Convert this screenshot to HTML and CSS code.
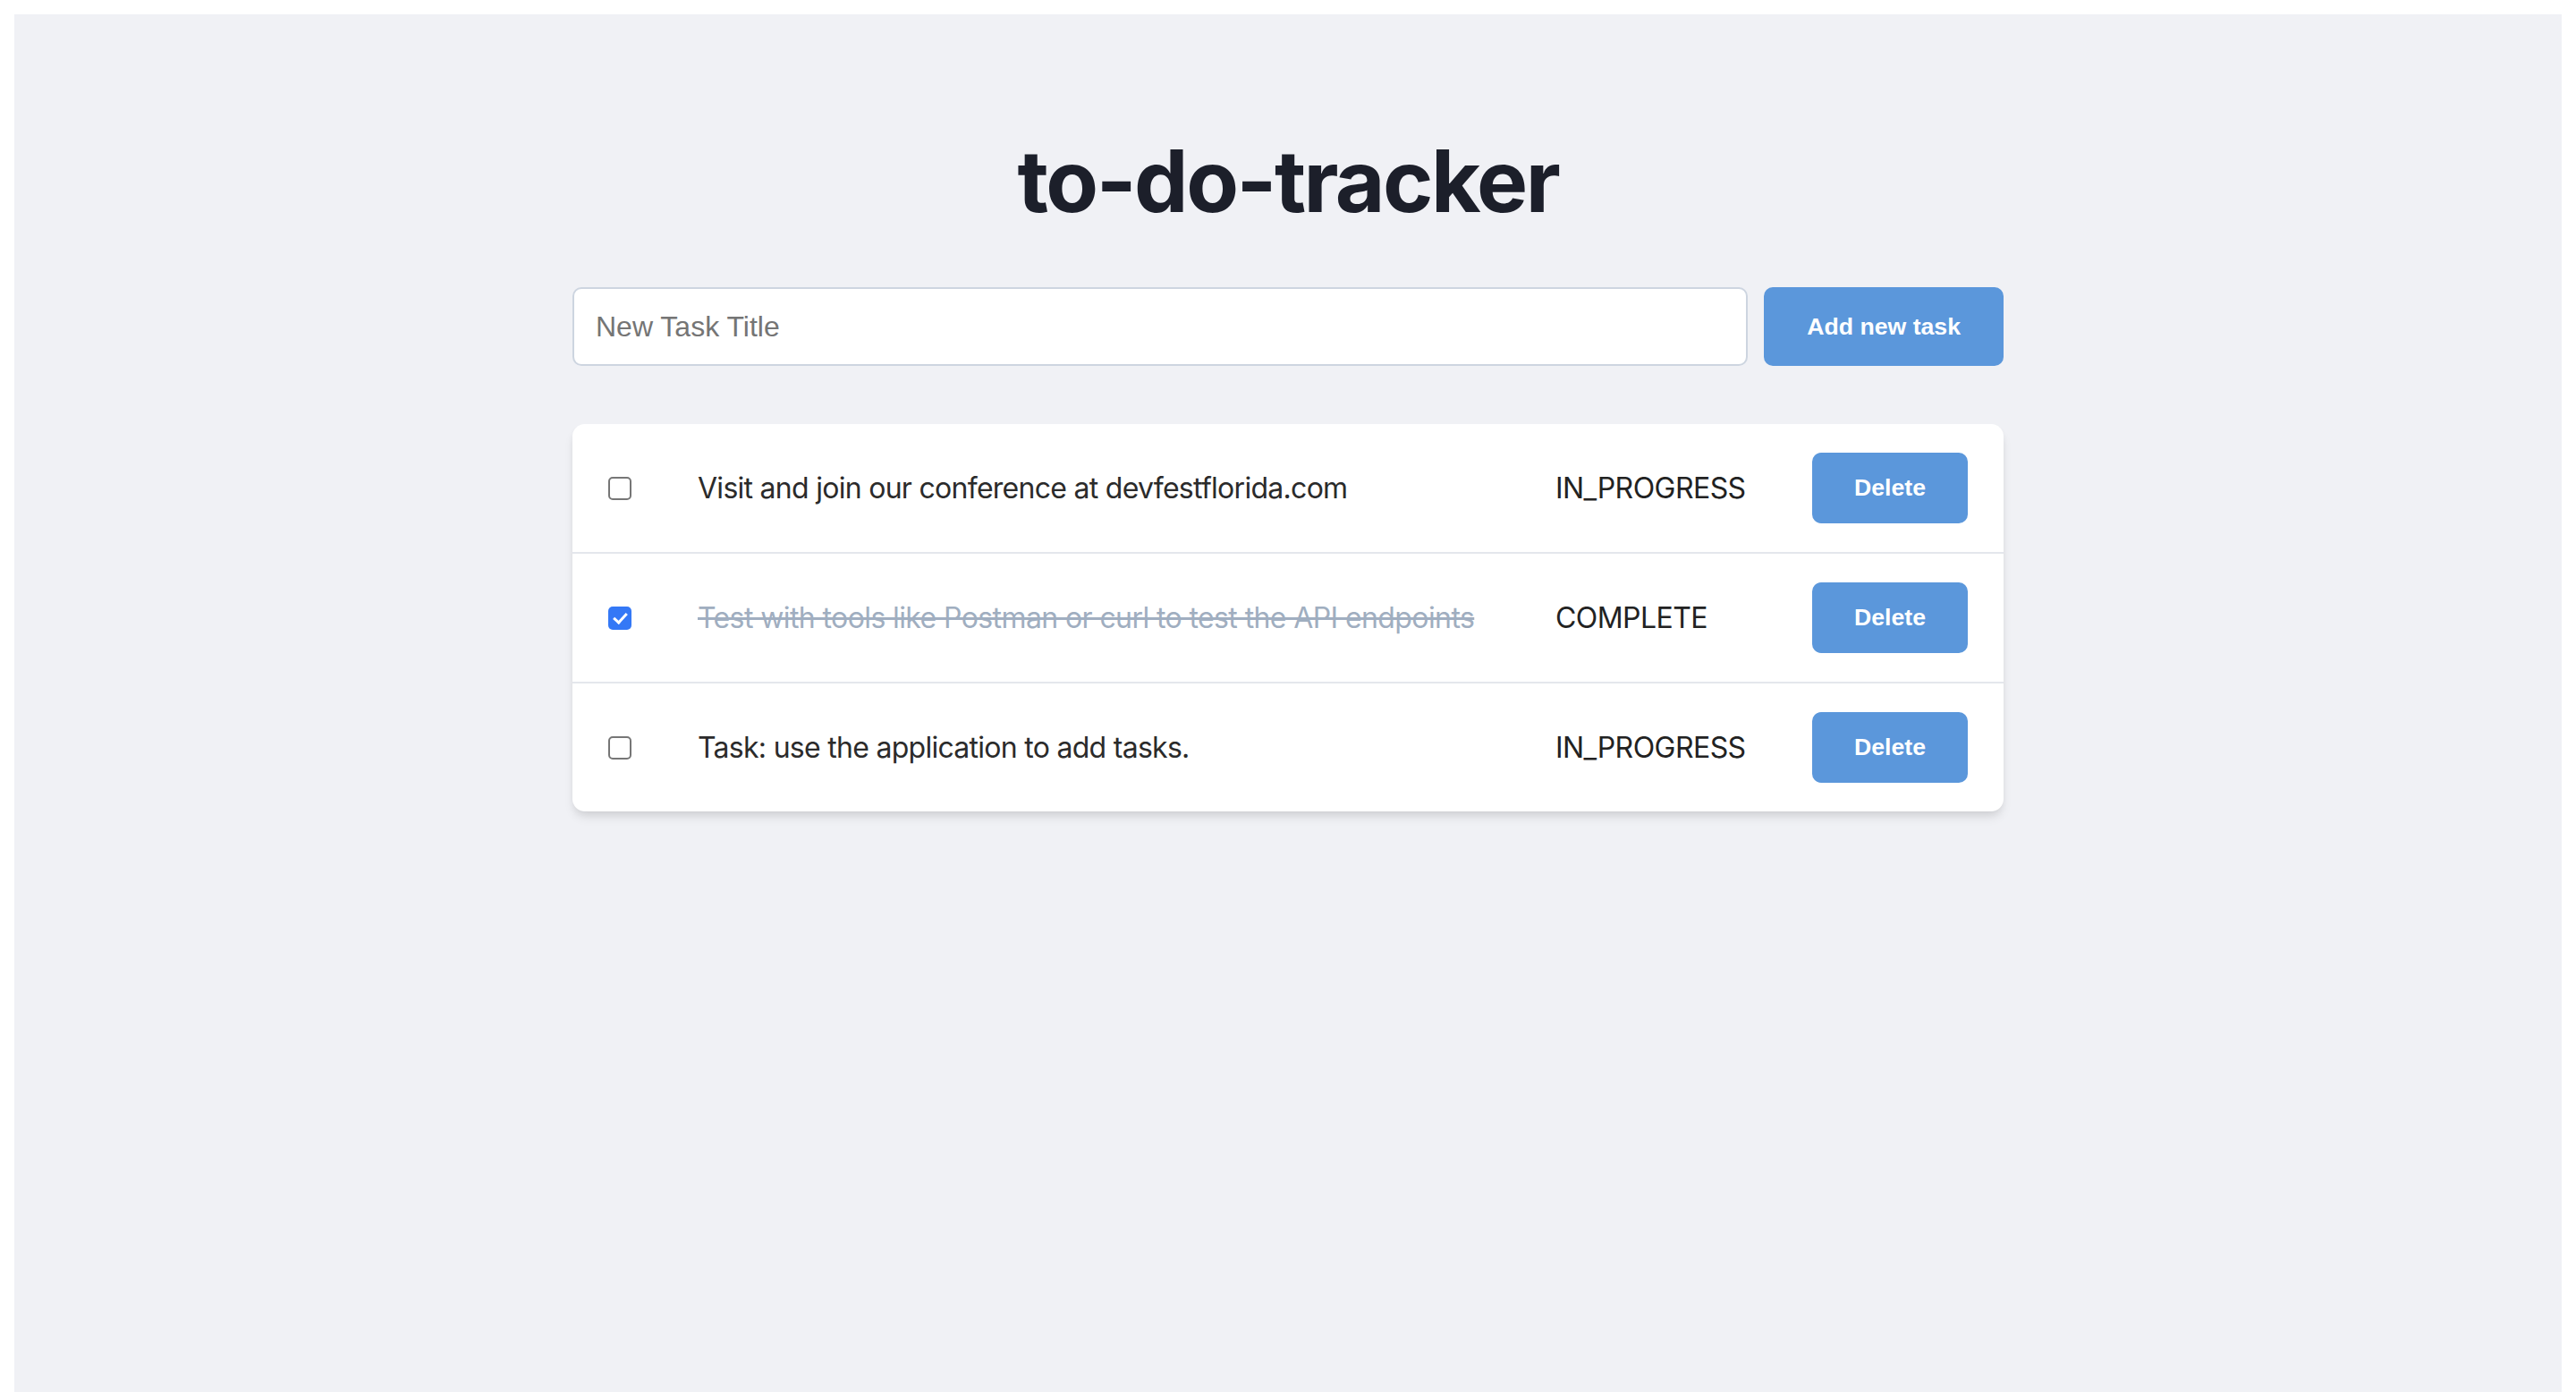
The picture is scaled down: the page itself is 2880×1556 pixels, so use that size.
FILE: index.html
```html
<!DOCTYPE html>
<html lang="en">
<head>
<meta charset="utf-8">
<title>to-do-tracker</title>
<link rel="stylesheet" href="styles.css">
</head>
<body>
<div class="app">
  <h1 class="title">to-do-tracker</h1>
  <div class="container">
    <form class="new-task">
      <input class="new-task-input" type="text" placeholder="New Task Title">
      <button class="btn btn-add" type="button">Add new task</button>
    </form>
    <ul class="task-list">
      <li class="task">
        <input class="task-check" type="checkbox">
        <span class="task-title">Visit and join our conference at devfestflorida.com</span>
        <span class="task-status">IN_PROGRESS</span>
        <button class="btn btn-delete" type="button">Delete</button>
      </li>
      <li class="task">
        <input class="task-check" type="checkbox" checked>
        <span class="task-title done">Test with tools like Postman or curl to test the API endpoints</span>
        <span class="task-status">COMPLETE</span>
        <button class="btn btn-delete" type="button">Delete</button>
      </li>
      <li class="task">
        <input class="task-check" type="checkbox">
        <span class="task-title">Task: use the application to add tasks.</span>
        <span class="task-status">IN_PROGRESS</span>
        <button class="btn btn-delete" type="button">Delete</button>
      </li>
    </ul>
  </div>
</div>
</body>
</html>
```

FILE: styles.css
```css
html, body {
  background: #ffffff;
}

body {
  margin: 16px;
  font-family: Inter, "Noto Sans", sans-serif;
}

.app {
  min-height: 100vh;
  background: #f0f1f5;
  padding-top: 138px;
  box-sizing: border-box;
}

.title {
  margin: 0;
  text-align: center;
  font-family: Inter, sans-serif;
  font-weight: 700;
  font-size: 96px;
  line-height: 96px;
  letter-spacing: -2.5px;
  color: #1c1f2a;
}

.container {
  width: 1600px;
  margin: 71px auto 0;
}

.new-task {
  display: flex;
  gap: 18px;
  margin: 0 0 65px;
}

.new-task-input {
  flex: 1;
  height: 88px;
  box-sizing: border-box;
  border: 2px solid #cdd5e0;
  border-radius: 10px;
  padding: 0 24px;
  background: #ffffff;
  font-family: "Liberation Sans", Arial, sans-serif;
  font-size: 32px;
  color: #222;
  outline: none;
}

.new-task-input::placeholder {
  color: #757575;
}

.btn {
  border: none;
  border-radius: 10px;
  background: #5b97db;
  color: #ffffff;
  font-family: "Liberation Sans", Arial, sans-serif;
  font-weight: 700;
  font-size: 26.67px;
  cursor: pointer;
}

.btn-add {
  height: 88px;
  padding: 0 48px;
}

.btn-delete {
  width: 174px;
  height: 79px;
  padding: 0;
}

.task-list {
  list-style: none;
  margin: 0;
  padding: 0;
  background: #ffffff;
  border-radius: 14px;
  overflow: hidden;
  box-shadow: 0 8px 12px -2px rgba(0, 0, 0, 0.10), 0 4px 8px -2px rgba(0, 0, 0, 0.06);
}

.task {
  display: flex;
  align-items: center;
  padding: 32px 40px;
  border-bottom: 2px solid #e4e7ec;
}

.task:last-child {
  border-bottom: none;
}

.task-check {
  appearance: none;
  -webkit-appearance: none;
  position: relative;
  box-sizing: border-box;
  width: 26px;
  height: 26px;
  margin: 0 74px 0 0;
  border: 2px solid #767676;
  border-radius: 5px;
  background: #ffffff;
  flex: none;
}

.task-check:checked {
  border: none;
  background: #3478f6;
}

.task-check:checked::after {
  content: "";
  position: absolute;
  left: 9px;
  top: 4px;
  width: 6px;
  height: 12px;
  border: solid #ffffff;
  border-width: 0 3.5px 3.5px 0;
  transform: rotate(42deg);
}

.task-title {
  flex: 1;
  font-size: 32px;
  letter-spacing: -0.72px;
  color: #2b2b2b;
}

.task-title.done {
  color: #a0aec0;
  text-decoration: line-through;
  letter-spacing: -0.6px;
}

.task-status {
  width: 287px;
  flex: none;
  font-size: 32px;
  letter-spacing: -0.55px;
  color: #222222;
}
```
